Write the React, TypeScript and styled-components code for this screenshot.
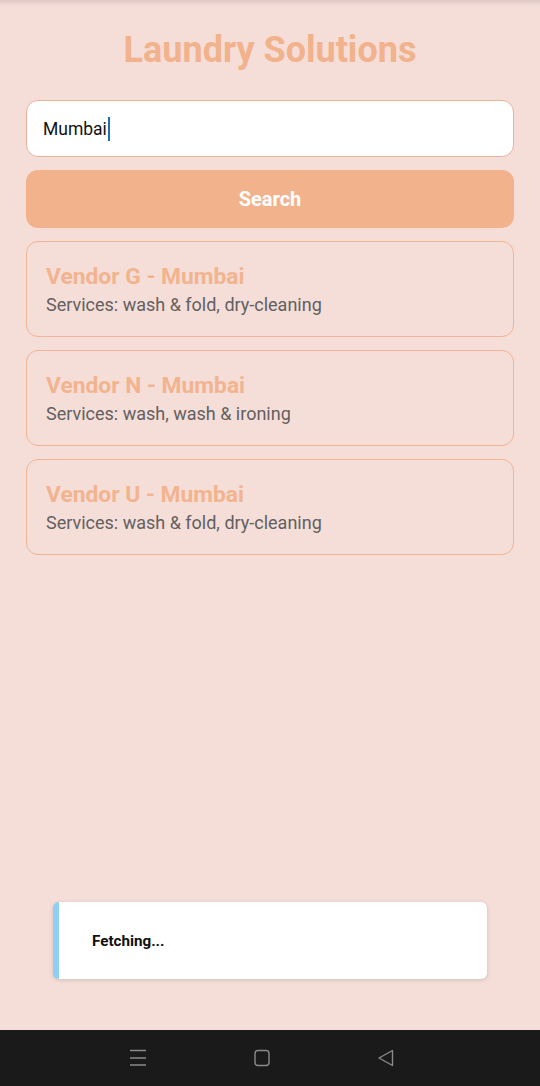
import React from "react";
import styled, { createGlobalStyle } from "styled-components";

const GlobalStyle = createGlobalStyle`
  html, body { margin: 0; padding: 0; }
  body {
    background: #f5ddd8;
    font-family: Roboto, "Noto Sans", "Liberation Sans", sans-serif;
  }
  * { box-sizing: border-box; }
`;

const Screen = styled.div`
  width: 540px;
  height: 1086px;
  display: flex;
  flex-direction: column;
  position: relative;
  overflow: hidden;
  background: #f5ddd8;
`;

const Content = styled.main`
  flex: 1;
  display: flex;
  flex-direction: column;
  padding: 30px 26px 0;
  background: linear-gradient(rgba(0, 0, 0, 0.09), rgba(0, 0, 0, 0) 6px), #f5ddd8;
`;

const Title = styled.h1`
  margin: 0 0 29px;
  text-align: center;
  font-size: 36px;
  line-height: 41px;
  font-weight: 700;
  color: #f2b28c;
`;

const SearchInput = styled.div`
  height: 57px;
  background: #fff;
  border: 1px solid #e9b29a;
  border-radius: 12px;
  display: flex;
  align-items: center;
  padding: 0 16px;
  font-size: 17.5px;
  color: #111;
`;

const Caret = styled.span`
  display: inline-block;
  width: 2px;
  height: 24px;
  background: #1e6fb0;
  margin-left: 1px;
`;

const SearchButton = styled.button`
  margin-top: 13px;
  height: 58px;
  border: none;
  border-radius: 12px;
  background: #f2b28c;
  color: #fff;
  font-family: inherit;
  font-size: 20px;
  font-weight: 700;
`;

const List = styled.div`
  margin-top: 13px;
  display: flex;
  flex-direction: column;
  gap: 13px;
`;

const Card = styled.div`
  height: 96px;
  border: 1px solid #efb595;
  border-radius: 12px;
  padding: 20px 19px 0;
  display: flex;
  flex-direction: column;
`;

const CardTitle = styled.div`
  font-size: 22.8px;
  line-height: 30px;
  font-weight: 700;
  color: #f2b48e;
`;

const CardSub = styled.div`
  font-size: 18px;
  line-height: 26px;
  color: #636060;
`;

const Toast = styled.div`
  position: absolute;
  left: 53px;
  top: 902px;
  width: 434px;
  height: 77px;
  background: #fff;
  border-radius: 6px;
  border-left: 6px solid #8ecff5;
  box-shadow: 0 1px 4px rgba(0, 0, 0, 0.15);
  display: flex;
  align-items: center;
  padding-left: 33px;
  font-size: 15.2px;
  font-weight: 700;
  color: #111;
`;

const NavBar = styled.nav`
  height: 56px;
  background: #1a1a1a;
  display: flex;
  align-items: center;
  justify-content: center;
  padding-right: 16px;
`;

const NavSlot = styled.div`
  width: 124px;
  display: flex;
  justify-content: center;
  align-items: center;
`;

const vendors = [
  { name: "Vendor G - Mumbai", services: "wash & fold, dry-cleaning" },
  { name: "Vendor N - Mumbai", services: "wash, wash & ironing" },
  { name: "Vendor U - Mumbai", services: "wash & fold, dry-cleaning" },
];

export default function App() {
  return (
    <>
      <GlobalStyle />
      <Screen>
        <Content>
          <Title>Laundry Solutions</Title>
          <SearchInput>
            Mumbai<Caret />
          </SearchInput>
          <SearchButton>Search</SearchButton>
          <List>
            {vendors.map((v) => (
              <Card key={v.name}>
                <CardTitle>{v.name}</CardTitle>
                <CardSub>Services: {v.services}</CardSub>
              </Card>
            ))}
          </List>
        </Content>
        <NavBar>
          <NavSlot>
            <svg width="18" height="18" viewBox="0 0 18 18" fill="none" stroke="#8a8a8a" strokeWidth="1.4">
              <path d="M1 1.5h16M1 9h16M1 16h16" />
            </svg>
          </NavSlot>
          <NavSlot>
            <svg width="18" height="18" viewBox="0 0 18 18" fill="none" stroke="#8a8a8a" strokeWidth="1.4">
              <rect x="2" y="1.5" width="14" height="15" rx="3" />
            </svg>
          </NavSlot>
          <NavSlot>
            <svg width="18" height="18" viewBox="0 0 18 18" fill="none" stroke="#8a8a8a" strokeWidth="1.4" strokeLinejoin="round">
              <path d="M15.5 1.5v15L2 9z" />
            </svg>
          </NavSlot>
        </NavBar>
        <Toast>Fetching...</Toast>
      </Screen>
    </>
  );
}
